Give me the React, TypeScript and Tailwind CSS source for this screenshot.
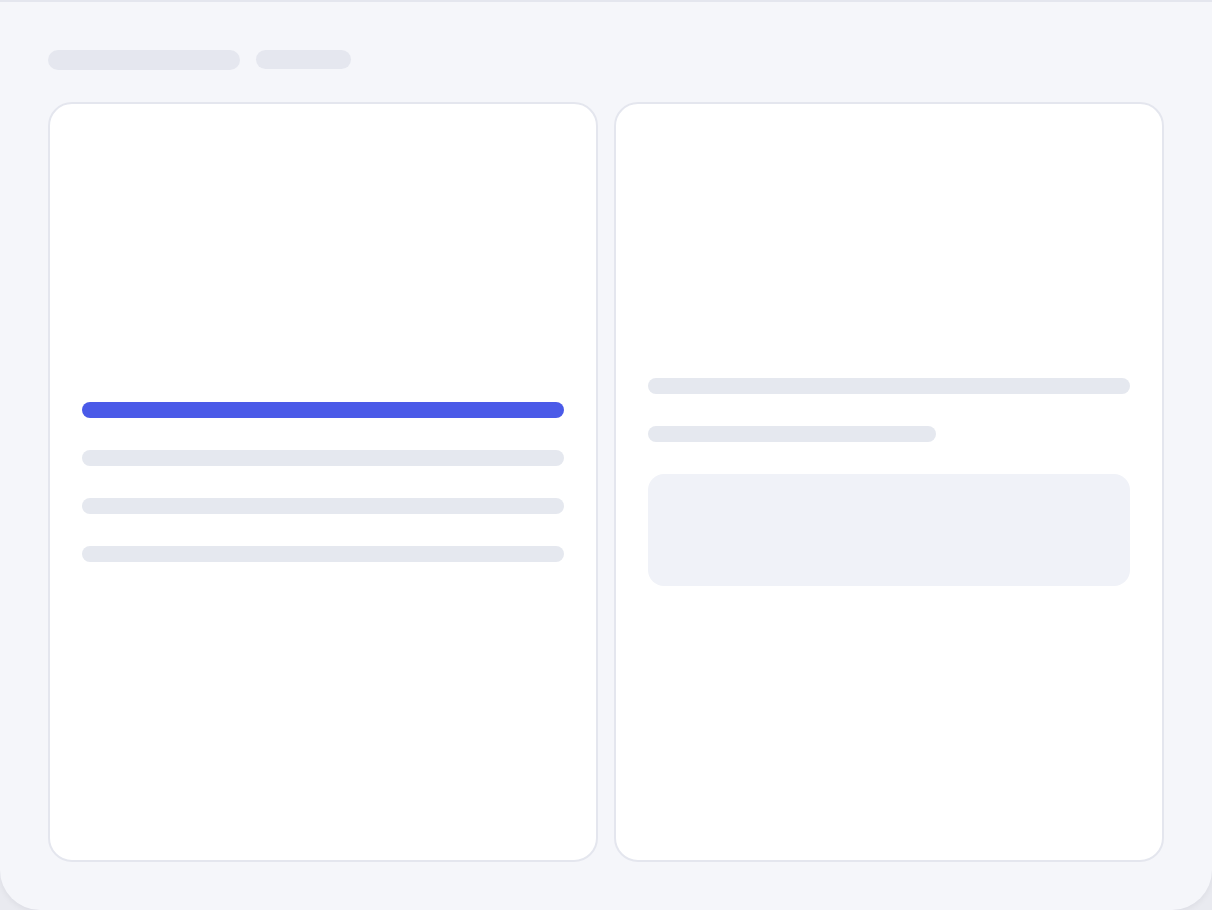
export default function App() {
  return (
    <div className="h-[910px] w-full bg-[#e9eaf0]">
      <div className="flex h-full flex-col rounded-b-[40px] border-t-2 border-[#e4e6ee] bg-[#f5f6fa] px-12 pt-12 pb-12 shadow-[0_2px_6px_rgba(20,24,40,0.06)]">
        <div className="flex items-start gap-4">
          <div className="h-5 w-48 rounded-full bg-[#e5e7ef]" />
          <div className="h-[19px] w-[95px] rounded-full bg-[#e5e7ef]" />
        </div>

        <div className="mt-8 grid flex-1 grid-cols-2 gap-4">
          <div className="flex flex-col justify-center gap-8 rounded-3xl border-2 border-[#e4e6ee] bg-white px-8">
            <div className="h-4 w-full rounded-lg bg-[#4a5ae8]" />
            <div className="h-4 w-full rounded-lg bg-[#e5e8ef]" />
            <div className="h-4 w-full rounded-lg bg-[#e5e8ef]" />
            <div className="h-4 w-full rounded-lg bg-[#e5e8ef]" />
          </div>

          <div className="flex flex-col justify-center gap-8 rounded-3xl border-2 border-[#e4e6ee] bg-white px-8">
            <div className="h-4 w-full rounded-lg bg-[#e5e8ef]" />
            <div className="h-4 w-[288px] rounded-lg bg-[#e5e8ef]" />
            <div className="h-28 w-full rounded-2xl bg-[#f0f2f8]" />
          </div>
        </div>
      </div>
    </div>
  );
}
